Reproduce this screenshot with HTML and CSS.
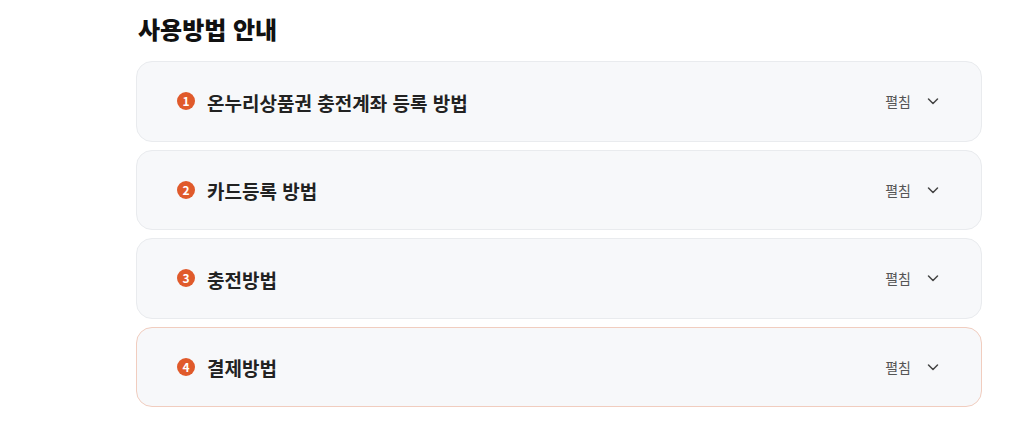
FILE: index.html
```html
<!DOCTYPE html>
<html lang="ko">
<head>
    <meta charset="utf-8">
    <title>사용방법 안내</title>
    <link rel="stylesheet" href="styles.css">
</head>
<body>
    <div class="guide">
        <h2 class="guide-title">사용방법 안내</h2>

        <div class="guide-list">
            <div class="guide-item">
                <span class="num">1</span>
                <span class="item-title">온누리상품권 충전계좌 등록 방법</span>
                <span class="toggle">펼침
                    <svg width="16" height="16" viewBox="0 0 16 16"><path d="M3.5 6 L8 10.5 L12.5 6" fill="none" stroke="#444" stroke-width="1.5" stroke-linecap="round" stroke-linejoin="round"/></svg>
                </span>
            </div>
            <div class="guide-item">
                <span class="num">2</span>
                <span class="item-title">카드등록 방법</span>
                <span class="toggle">펼침
                    <svg width="16" height="16" viewBox="0 0 16 16"><path d="M3.5 6 L8 10.5 L12.5 6" fill="none" stroke="#444" stroke-width="1.5" stroke-linecap="round" stroke-linejoin="round"/></svg>
                </span>
            </div>
            <div class="guide-item">
                <span class="num">3</span>
                <span class="item-title">충전방법</span>
                <span class="toggle">펼침
                    <svg width="16" height="16" viewBox="0 0 16 16"><path d="M3.5 6 L8 10.5 L12.5 6" fill="none" stroke="#444" stroke-width="1.5" stroke-linecap="round" stroke-linejoin="round"/></svg>
                </span>
            </div>
            <div class="guide-item active">
                <span class="num">4</span>
                <span class="item-title">결제방법</span>
                <span class="toggle">펼침
                    <svg width="16" height="16" viewBox="0 0 16 16"><path d="M3.5 6 L8 10.5 L12.5 6" fill="none" stroke="#444" stroke-width="1.5" stroke-linecap="round" stroke-linejoin="round"/></svg>
                </span>
            </div>
        </div>
    </div>
</body>
</html>
```

FILE: styles.css
```css
body {
    margin: 0;
    background: #ffffff;
    font-family: "Noto Sans CJK KR", "Noto Sans", sans-serif;
    color: #222;
}
.guide {
    width: 846px;
    margin-left: 136px;
    padding-top: 12px;
}
.guide-title {
    margin: 0 0 15px 2px;
    font-size: 24px;
    font-weight: 900;
    line-height: 34px;
    color: #111;
}
.guide-list {
    display: flex;
    flex-direction: column;
    gap: 8px;
}
.guide-item {
    display: flex;
    align-items: center;
    height: 80.5px;
    box-sizing: border-box;
    padding: 0 40px;
    background: #f7f8fa;
    border: 1px solid #e9ebee;
    border-radius: 16px;
}
.guide-item.active {
    border-color: #f1cdbf;
}
.num {
    display: flex;
    align-items: center;
    justify-content: center;
    width: 18px;
    height: 18px;
    border-radius: 50%;
    background: #e05a2b;
    color: #fff;
    font-size: 12px;
    font-weight: 700;
    line-height: 1;
    margin-right: 12px;
}
.item-title {
    flex: 1;
    font-size: 19px;
    font-weight: 700;
    color: #222;
    padding-top: 2px;
}
.toggle {
    display: flex;
    align-items: center;
    gap: 14px;
    font-size: 14px;
    color: #555;
}
.toggle svg {
    display: block;
}
```
